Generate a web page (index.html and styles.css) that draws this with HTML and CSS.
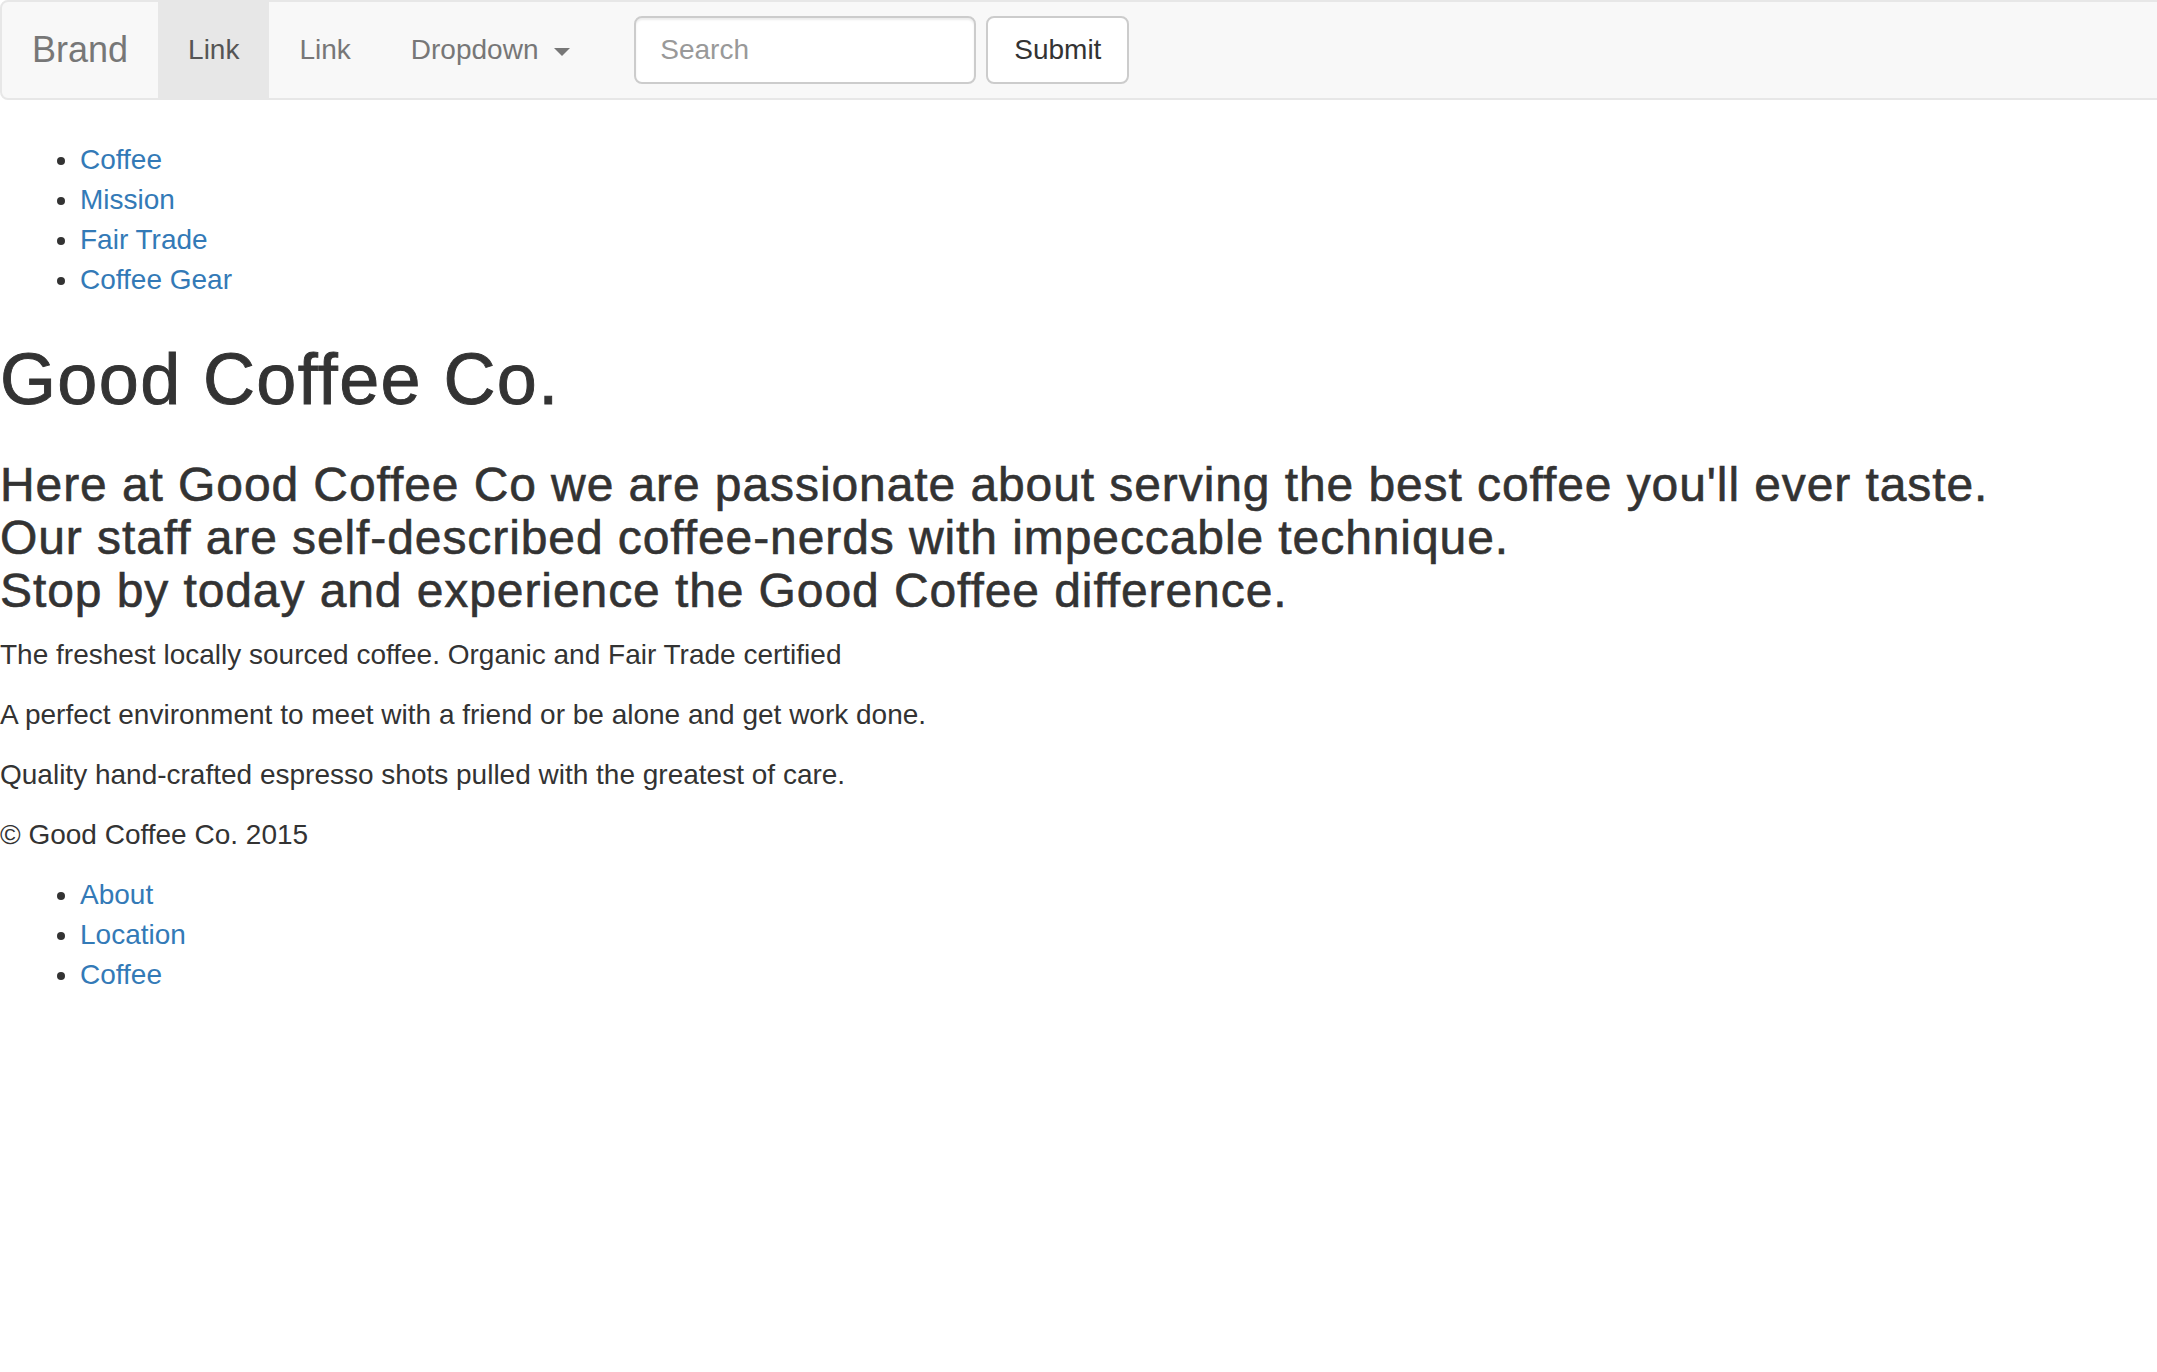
FILE: index.html
```html
<!DOCTYPE html>
<html lang="en">
<head>
<meta charset="utf-8">
<title>Good Coffee Co.</title>
<link rel="stylesheet" href="styles.css">
</head>
<body>
<nav class="navbar">
  <a class="navbar-brand" href="#">Brand</a>
  <ul class="nav">
    <li class="active"><a href="#">Link</a></li>
    <li><a href="#">Link</a></li>
    <li><a href="#">Dropdown <span class="caret"></span></a></li>
  </ul>
  <form class="navbar-form">
    <input class="form-control" type="text" placeholder="Search">
    <button class="btn" type="button">Submit</button>
  </form>
</nav>
<ul class="list">
  <li><a href="#">Coffee</a></li>
  <li><a href="#">Mission</a></li>
  <li><a href="#">Fair Trade</a></li>
  <li><a href="#">Coffee Gear</a></li>
</ul>
<h1 class="title">Good Coffee Co.</h1>
<h3 class="lead">Here at Good Coffee Co we are passionate about serving the best coffee you'll ever taste.<br>Our staff are self-described coffee-nerds with impeccable technique.<br>Stop by today and experience the Good Coffee difference.</h3>
<p class="para">The freshest locally sourced coffee. Organic and Fair Trade certified</p>
<p class="para">A perfect environment to meet with a friend or be alone and get work done.</p>
<p class="para">Quality hand-crafted espresso shots pulled with the greatest of care.</p>
<p class="para">&copy; Good Coffee Co. 2015</p>
<ul class="list">
  <li><a href="#">About</a></li>
  <li><a href="#">Location</a></li>
  <li><a href="#">Coffee</a></li>
</ul>
</body>
</html>
```
FILE: styles.css
```css
html, body {
  margin: 0;
  padding: 0;
  overflow-x: hidden;
}
body {
  font-family: "Liberation Sans", Arial, Helvetica, sans-serif;
  font-size: 28px;
  line-height: 40px;
  color: #333;
  background: #fff;
}
a {
  color: #337ab7;
  text-decoration: none;
}
.navbar {
  display: flex;
  align-items: flex-start;
  height: 96px;
  margin: 0 -20px 40px 0;
  background: #f8f8f8;
  border: 2px solid #e7e7e7;
  border-radius: 8px;
}
.navbar-brand {
  display: block;
  padding: 28px 30px;
  font-size: 36px;
  line-height: 40px;
  height: 96px;
  box-sizing: border-box;
  color: #777;
}
.nav {
  display: flex;
  margin: 0;
  padding: 0;
  list-style: none;
}
.nav a {
  display: block;
  padding: 28px 30px;
  line-height: 40px;
  color: #777;
}
.nav .active a {
  background: #e7e7e7;
  color: #555;
}
.caret {
  display: inline-block;
  width: 0;
  height: 0;
  margin-left: 8px;
  vertical-align: middle;
  border-top: 8px solid #777;
  border-left: 8px solid transparent;
  border-right: 8px solid transparent;
}
.navbar-form {
  display: flex;
  gap: 10px;
  margin: 14px 0 0;
  padding: 0 30px 0 34px;
}
.form-control {
  width: 342px;
  height: 68px;
  box-sizing: border-box;
  padding: 12px 24px;
  font-family: inherit;
  font-size: 28px;
  color: #555;
  background: #fff;
  border: 2px solid #ccc;
  border-radius: 8px;
  box-shadow: inset 0 2px 2px rgba(0,0,0,.075);
  outline: none;
}
.form-control::placeholder {
  color: #999;
}
.btn {
  height: 68px;
  box-sizing: border-box;
  padding: 12px 26px;
  font-family: inherit;
  font-size: 28px;
  line-height: 40px;
  color: #333;
  background: #fff;
  border: 2px solid #ccc;
  border-radius: 8px;
}
.list {
  margin: 0 0 20px;
  padding-left: 80px;
}
.title {
  margin: 40px 0 20px;
  font-size: 72px;
  line-height: 1.1;
  font-weight: 500;
  letter-spacing: 0.019em;
  -webkit-text-stroke: 0.9px #333;
}
.lead {
  margin: 40px 0 17px;
  font-size: 48px;
  line-height: 1.1;
  font-weight: 500;
  letter-spacing: 0.019em;
  -webkit-text-stroke: 0.6px #333;
}
.para {
  margin: 0 0 20px;
}
```
